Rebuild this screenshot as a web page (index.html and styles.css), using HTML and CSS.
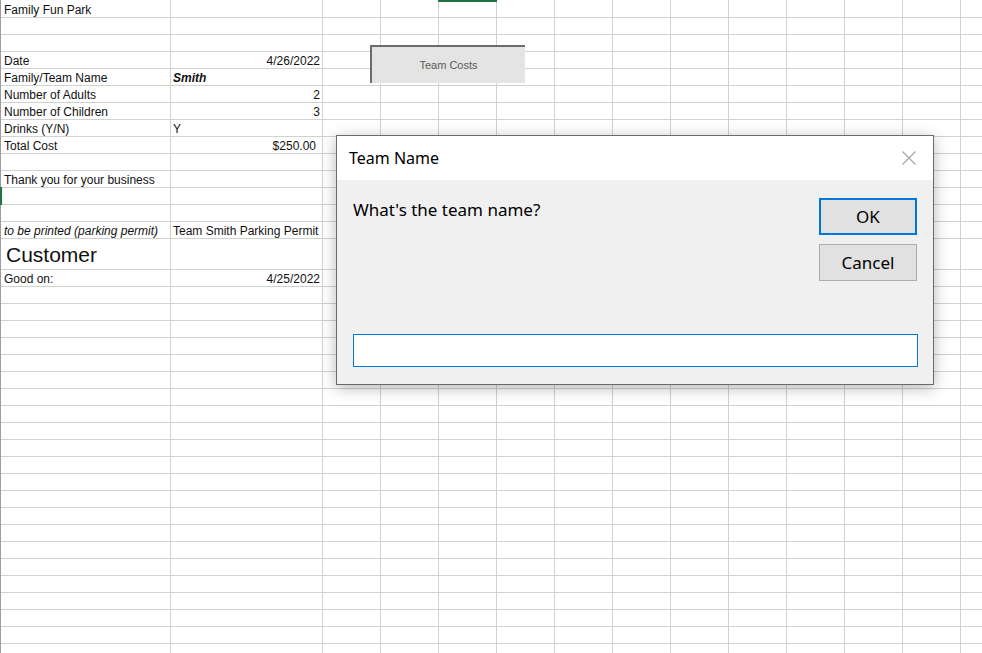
FILE: index.html
```html
<!DOCTYPE html>
<html>
<head>
<meta charset="utf-8">
<link rel="stylesheet" href="styles.css">
</head>
<body>
<div class="sheet">
  <div class="row first"><div class="c a">Family Fun Park</div><div class="c b"></div><div class="rest"></div></div>
  <div class="row"><div class="c a"></div><div class="c b"></div><div class="rest"></div></div>
  <div class="row"><div class="c a"></div><div class="c b"></div><div class="rest"></div></div>
  <div class="row"><div class="c a">Date</div><div class="c b num">4/26/2022</div><div class="rest"></div></div>
  <div class="row"><div class="c a">Family/Team Name</div><div class="c b bi">Smith</div><div class="rest"></div></div>
  <div class="row"><div class="c a">Number of Adults</div><div class="c b num">2</div><div class="rest"></div></div>
  <div class="row"><div class="c a">Number of Children</div><div class="c b num">3</div><div class="rest"></div></div>
  <div class="row"><div class="c a">Drinks (Y/N)</div><div class="c b">Y</div><div class="rest"></div></div>
  <div class="row"><div class="c a">Total Cost</div><div class="c b num acct">$250.00</div><div class="rest"></div></div>
  <div class="row"><div class="c a"></div><div class="c b"></div><div class="rest"></div></div>
  <div class="row"><div class="c a">Thank you for your business</div><div class="c b"></div><div class="rest"></div></div>
  <div class="row"><div class="c a"></div><div class="c b"></div><div class="rest"></div></div>
  <div class="row"><div class="c a"></div><div class="c b"></div><div class="rest"></div></div>
  <div class="row"><div class="c a it">to be printed (parking permit)</div><div class="c b">Team Smith Parking Permit</div><div class="rest"></div></div>
  <div class="row tall"><div class="c a big">Customer</div><div class="c b"></div><div class="rest"></div></div>
  <div class="row"><div class="c a">Good on:</div><div class="c b num">4/25/2022</div><div class="rest"></div></div>
  <div class="row filler"><div class="c a"></div><div class="c b"></div><div class="rest"></div></div>
</div>

<div class="sel-col"></div>
<div class="sel-row"></div>

<div class="shape-btn">Team Costs</div>

<div class="dialog">
  <div class="dlg-title">
    <span>Team Name</span>
    <svg class="dlg-close" width="14" height="14" viewBox="0 0 14 14"><path d="M0.5 0.5 L13.5 13.5 M13.5 0.5 L0.5 13.5" stroke="#a3a3a3" stroke-width="1.1" fill="none"/></svg>
  </div>
  <div class="dlg-body">
    <div class="dlg-top">
      <div class="dlg-prompt">What's the team name?</div>
      <div class="dlg-buttons">
        <div class="btn btn-default">OK</div>
        <div class="btn">Cancel</div>
      </div>
    </div>
    <div class="dlg-input"></div>
  </div>
</div>
</body>
</html>
```

FILE: styles.css
```css
html, body {
  margin: 0;
  padding: 0;
  background: #ffffff;
  overflow: hidden;
  width: 982px;
  height: 653px;
}

body {
  position: relative;
  font-family: "Liberation Sans", Arial, sans-serif;
  color: #111;
}

.sheet {
  display: flex;
  flex-direction: column;
  height: 653px;
  width: 982px;
  box-sizing: border-box;
  overflow: hidden;
  border-left: 1px solid #9c9c9c;
}

.row {
  display: grid;
  grid-template-columns: 170px 152px 1fr;
  height: 17px;
  flex: none;
}

.row.first { height: 18px; }
.row.tall { height: 31px; }
.row.filler { flex: 1; }

.c {
  box-sizing: border-box;
  border-right: 1px solid #cdd3cd;
  border-bottom: 1px solid #cdd3cd;
  display: flex;
  align-items: flex-end;
  font-size: 12px;
  line-height: 14px;
  padding: 0 2px 0 3px;
  white-space: nowrap;
  overflow: hidden;
}

.c.b { padding-left: 2px; }
.c.num { justify-content: flex-end; }
.c.acct { padding-right: 6px; }
.c.bi { font-weight: bold; font-style: italic; }
.c.it { font-style: italic; }
.c.big {
  font-size: 21px;
  line-height: 24px;
  padding-bottom: 2px;
  padding-left: 5px;
}

.rest {
  border-bottom: 1px solid #cdd3cd;
  background-image: repeating-linear-gradient(to right, transparent 0, transparent 57px, #cdd3cd 57px, #cdd3cd 58px);
}

.row.filler .c,
.row.filler .rest {
  border-bottom: none;
}

.row.filler .c {
  background-image: repeating-linear-gradient(to bottom, transparent 0, transparent 16px, #cdd3cd 16px, #cdd3cd 17px);
}

.row.filler .rest {
  background-image:
    repeating-linear-gradient(to bottom, transparent 0, transparent 16px, #cdd3cd 16px, #cdd3cd 17px),
    repeating-linear-gradient(to right, transparent 0, transparent 57px, #cdd3cd 57px, #cdd3cd 58px);
}

.sel-col {
  position: absolute;
  left: 438px;
  top: 0;
  width: 59px;
  height: 2px;
  background: #217346;
}

.sel-row {
  position: absolute;
  left: 0;
  top: 187px;
  width: 2px;
  height: 18px;
  background: #217346;
}

.shape-btn {
  position: absolute;
  left: 370px;
  top: 45px;
  width: 155px;
  height: 38px;
  box-sizing: border-box;
  border-top: 2px solid #6c6c6c;
  border-left: 2px solid #6c6c6c;
  background: #e4e4e4;
  display: flex;
  align-items: center;
  justify-content: center;
  font-size: 11px;
  color: #5a5a5a;
}

.dialog {
  position: absolute;
  left: 336px;
  top: 135px;
  width: 598px;
  height: 250px;
  box-sizing: border-box;
  border: 1px solid #6a6a6a;
  background: #f0f0f0;
  box-shadow: 0 3px 14px rgba(0, 0, 0, 0.28);
  display: flex;
  flex-direction: column;
  font-family: "Noto Sans", "Liberation Sans", sans-serif;
  color: #000;
}

.dlg-title {
  height: 44px;
  flex: none;
  background: #ffffff;
  display: flex;
  align-items: center;
  justify-content: space-between;
  padding: 0 17px 0 12px;
  font-size: 16px;
}

.dlg-close { display: block; }

.dlg-body {
  flex: 1;
  display: flex;
  flex-direction: column;
  padding: 18px 16px 17px 16px;
}

.dlg-top {
  display: flex;
  justify-content: space-between;
  align-items: flex-start;
}

.dlg-prompt {
  font-size: 17px;
  line-height: 23px;
}

.dlg-buttons {
  display: flex;
  flex-direction: column;
  gap: 9px;
}

.btn {
  width: 98px;
  height: 37px;
  box-sizing: border-box;
  border: 1px solid #adadad;
  background: #e1e1e1;
  display: flex;
  align-items: center;
  justify-content: center;
  font-size: 17px;
}

.btn-default {
  border: 2px solid #0078d7;
}

.dlg-input {
  margin-top: auto;
  margin-right: -1px;
  height: 33px;
  box-sizing: border-box;
  border: 1px solid #0078d7;
  background: #ffffff;
}
```
